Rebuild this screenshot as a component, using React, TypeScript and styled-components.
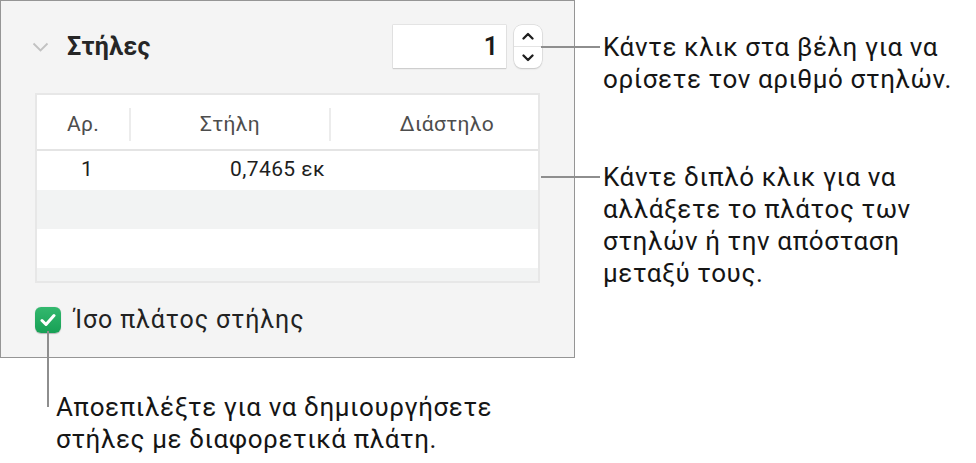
import styled, { createGlobalStyle } from "styled-components"

const GlobalStyle = createGlobalStyle`
    html, body {
        margin: 0;
        padding: 0;
        background: #ffffff;
    }
    body {
        font-family: Roboto, "Liberation Sans", sans-serif;
        color: #1c1c1c;
    }
`

const rows = [
    { num: "1", width: "0,7465 εκ", gap: "" },
    { num: "", width: "", gap: "" },
    { num: "", width: "", gap: "" },
    { num: "", width: "", gap: "" },
]

const Chevron = ({ up }: { up?: boolean }) => (
    <svg width="12" height="8" viewBox="0 0 12 8">
        <path
            d={up ? "M1.5 6.5 L6 2 L10.5 6.5" : "M1.5 1.5 L6 6 L10.5 1.5"}
            fill="none"
            stroke="#1e1e1e"
            strokeWidth="2.3"
            strokeLinecap="round"
            strokeLinejoin="round"
        />
    </svg>
)

export default function App() {
    return (
        <Page>
            <GlobalStyle />
            <TopArea>
                <Panel>
                    <Header>
                        <svg width="17" height="10" viewBox="0 0 17 10">
                            <path d="M1.5 1.5 L8.5 8.5 L15.5 1.5" fill="none" stroke="#c2c2c2" strokeWidth="1.8" />
                        </svg>
                        <Title>Στήλες</Title>
                        <NumberField>1</NumberField>
                        <Stepper>
                            <StepHalf><Chevron up /></StepHalf>
                            <StepHalf divider><Chevron /></StepHalf>
                        </Stepper>
                    </Header>

                    <Table>
                        <HeadRow>
                            <HeadCell align="center" width={92}>Αρ.</HeadCell>
                            <HeadCell align="center" width={200} sep>Στήλη</HeadCell>
                            <HeadCell align="right" sep pad={44}>Διάστηλο</HeadCell>
                        </HeadRow>
                        <Body>
                            {rows.map((r, i) => (
                                <Row key={i} striped={i % 2 === 1}>
                                    <Cell align="center" width={94} pad={0}>{r.num}</Cell>
                                    <Cell align="right" width={202} pad={8}>{r.width}</Cell>
                                    <Cell align="right" pad={44}>{r.gap}</Cell>
                                </Row>
                            ))}
                        </Body>
                    </Table>

                    <CheckRow>
                        <CheckBox>
                            <svg width="16" height="14" viewBox="0 0 16 14">
                                <path d="M2 7.5 L6 11.5 L14 2.5" fill="none" stroke="#fff" strokeWidth="3" strokeLinecap="round" strokeLinejoin="round" />
                            </svg>
                        </CheckBox>
                        <CheckLabel>Ίσο πλάτος στήλης</CheckLabel>
                    </CheckRow>
                </Panel>

                <Callouts>
                    <Callout>
                        <HLeader />
                        <CalloutText>
                            Κάντε κλικ στα βέλη για να<br />
                            ορίσετε τον αριθμό στηλών.
                        </CalloutText>
                    </Callout>
                    <Callout spaced>
                        <HLeader />
                        <CalloutText>
                            Κάντε διπλό κλικ για να<br />
                            αλλάξετε το πλάτος των<br />
                            στηλών ή την απόσταση<br />
                            μεταξύ τους.
                        </CalloutText>
                    </Callout>
                </Callouts>
            </TopArea>

            <BottomCallout>
                <VLeader />
                <CalloutText>
                    Αποεπιλέξτε για να δημιουργήσετε<br />
                    στήλες με διαφορετικά πλάτη.
                </CalloutText>
            </BottomCallout>
        </Page>
    )
}

const Page = styled.div`
    width: 976px;
    height: 463px;
    overflow: hidden;
    display: flex;
    flex-direction: column;
`

const TopArea = styled.div`
    display: flex;
    align-items: flex-start;
`

const Panel = styled.section`
    box-sizing: border-box;
    flex: 0 0 575px;
    height: 358px;
    background: #f4f4f4;
    border: 1px solid #959595;
    padding: 24px 33px 0 31px;
    display: flex;
    flex-direction: column;
`

const Header = styled.div`
    display: flex;
    align-items: center;
    height: 43px;
`

const Title = styled.h2`
    margin: 0 0 0 18px;
    flex: 1;
    font-size: 25px;
    font-weight: 700;
    letter-spacing: 0.3px;
    color: #262626;
`

const NumberField = styled.div`
    box-sizing: border-box;
    width: 113px;
    height: 43px;
    background: #fff;
    box-shadow: 0 0 0 0.5px #d4d4d4, 0 1px 1px rgba(0, 0, 0, 0.18);
    text-align: right;
    padding-right: 8px;
    font-size: 25px;
    font-weight: 600;
    line-height: 43px;
    color: #1a1a1a;
`

const Stepper = styled.div`
    box-sizing: border-box;
    width: 28px;
    height: 43px;
    margin-left: 8px;
    margin-right: -1px;
    background: #fff;
    border-radius: 8px;
    box-shadow: 0 0 0 0.5px #cfcfcf, 0 1px 1.5px rgba(0, 0, 0, 0.2);
    display: flex;
    flex-direction: column;
`

const StepHalf = styled.div<{ divider?: boolean }>`
    flex: 1;
    display: flex;
    align-items: center;
    justify-content: center;
    border-top: ${(p) => (p.divider ? "1px solid #e4e4e4" : "none")};
`

const Table = styled.div`
    box-sizing: border-box;
    margin: 25px 0 0 3px;
    width: 505px;
    height: 190px;
    border: 2px solid #e7e7e7;
    background: #fff;
    display: flex;
    flex-direction: column;
`

const HeadRow = styled.div`
    display: flex;
    height: 56px;
    align-items: center;
    padding-top: 4px;
    box-sizing: border-box;
    border-bottom: 2px solid #e4e4e4;
`

const HeadCell = styled.div<{ align: string; width?: number; sep?: boolean; pad?: number }>`
    box-sizing: border-box;
    flex: ${(p) => (p.width ? `0 0 ${p.width}px` : "1")};
    text-align: ${(p) => p.align};
    padding-right: ${(p) => p.pad || 0}px;
    font-size: 21px;
    letter-spacing: 0.3px;
    color: #4d4d4d;
    line-height: 33px;
    border-left: ${(p) => (p.sep ? "2px solid #ececec" : "none")};
`

const Body = styled.div`
    flex: 1;
    overflow: hidden;
`

const Row = styled.div<{ striped: boolean }>`
    display: flex;
    height: 39px;
    align-items: center;
    padding-bottom: 4px;
    box-sizing: border-box;
    background: ${(p) => (p.striped ? "#f2f3f3" : "#fff")};
`

const Cell = styled.div<{ align: string; width?: number; pad?: number }>`
    box-sizing: border-box;
    flex: ${(p) => (p.width ? `0 0 ${p.width}px` : "1")};
    text-align: ${(p) => p.align};
    padding-right: ${(p) => p.pad || 0}px;
    padding-left: ${(p) => (p.align === "center" ? 6 : 0)}px;
    font-size: 21px;
    letter-spacing: 0.4px;
    color: #1e1e1e;
`

const CheckRow = styled.div`
    display: flex;
    align-items: center;
    margin: 22px 0 0 3px;
`

const CheckBox = styled.div`
    width: 26px;
    height: 26px;
    border-radius: 6px;
    background: linear-gradient(#33b86e, #17a055);
    box-shadow: 0 0.5px 1px rgba(0, 0, 0, 0.25);
    display: flex;
    align-items: center;
    justify-content: center;
`

const CheckLabel = styled.span`
    margin-left: 13px;
    font-size: 25px;
    letter-spacing: 0.9px;
    color: #222;
`

const Callouts = styled.div`
    display: flex;
    flex-direction: column;
    margin-left: -34px;
    padding-top: 31px;
`

const Callout = styled.div<{ spaced?: boolean }>`
    display: flex;
    align-items: flex-start;
    margin-top: ${(p) => (p.spaced ? 66 : 0)}px;
`

const HLeader = styled.div`
    flex: 0 0 59px;
    height: 2px;
    margin: 15px 3px 0 0;
    background: #8e8e8e;
`

const CalloutText = styled.p`
    margin: 0;
    font-size: 26px;
    letter-spacing: 0.6px;
    line-height: 32px;
    color: #151515;
    white-space: nowrap;
`

const BottomCallout = styled.div`
    display: flex;
    align-items: flex-start;
    margin-top: 33px;
    padding-left: 47px;
`

const VLeader = styled.div`
    flex: 0 0 2px;
    height: 76px;
    margin: -60px 7px 0 0;
    background: #8e8e8e;
`
